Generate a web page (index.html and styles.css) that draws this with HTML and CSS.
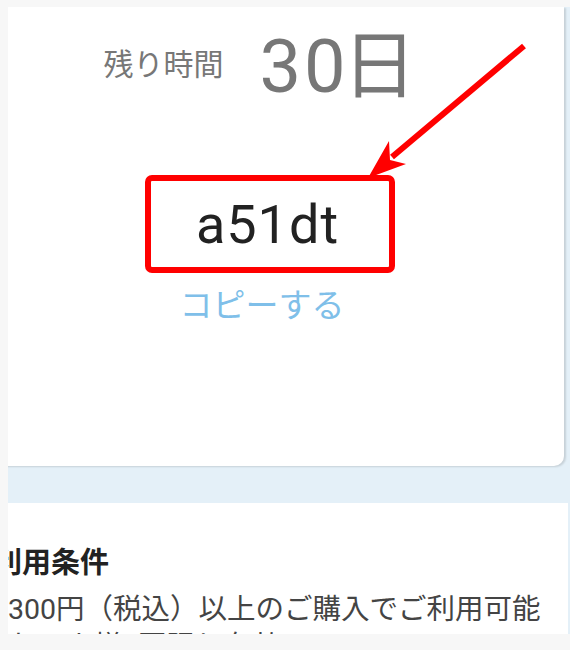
FILE: index.html
```html
<!DOCTYPE html>
<html lang="ja">
<head>
<meta charset="utf-8">
<link rel="stylesheet" href="styles.css">
</head>
<body>
<div class="frame">
  <div class="page">
    <section class="card">
      <div class="remain">
        <span class="remain-label">残り時間</span>
        <span class="remain-value"><span class="remain-num">30</span><span class="remain-unit">日</span></span>
      </div>
      <div class="code-box"><span class="code">a51dt</span></div>
      <div class="copy">コピーする</div>
    </section>
    <section class="terms">
      <h2 class="terms-title">利用条件</h2>
      <p class="terms-line">300円（税込）以上のご購入でご利用可能</p>
      <p class="terms-line terms-next">お一人様1回限り有効</p>
    </section>
  </div>
</div>
<svg class="arrow" width="570" height="650" viewBox="0 0 570 650">
  <line x1="524" y1="46" x2="392" y2="157" stroke="#ff0000" stroke-width="6"/>
  <polygon points="368,178 389,141 390,160 406,164" fill="#ff0000"/>
</svg>
</body>
</html>
```

FILE: styles.css
```css
html, body {
  margin: 0;
  padding: 0;
}
body {
  background: #f7f7f7;
  position: relative;
  width: 570px;
  height: 650px;
  overflow: hidden;
  font-family: Roboto, "Noto Sans CJK JP", sans-serif;
}
.frame {
  margin: 7px 0 0 8px;
  width: 562px;
  height: 627px;
  overflow: hidden;
  background: #e4f0f8;
}
.page {
  margin-left: -40px;
  width: 600px;
}
.card {
  width: 596px;
  height: 459px;
  box-sizing: border-box;
  padding-top: 20px;
  background: #fff;
  border-bottom-right-radius: 10px;
  box-shadow: 2px 1px 2px rgba(0, 0, 0, 0.13);
  display: flex;
  flex-direction: column;
  align-items: center;
  margin-bottom: 37px;
}
.remain {
  display: flex;
  align-items: center;
  padding-right: 12px;
  color: #777;
}
.remain-label {
  font-family: "Noto Sans CJK JP", sans-serif;
  font-size: 30px;
  line-height: 40px;
  margin-bottom: 10px;
}
.remain-value {
  display: block;
  height: 80px;
  font-size: 74px;
  line-height: 80px;
  margin-left: 36px;
  white-space: nowrap;
}
.remain-num {
  letter-spacing: 3px;
}
.remain-unit {
  font-family: "Noto Sans CJK JP", sans-serif;
  font-size: 74px;
  line-height: 50px;
  margin-left: -6px;
}
.code-box {
  margin-top: 68px;
  margin-left: 8px;
  width: 250px;
  height: 98px;
  box-sizing: border-box;
  border: 6px solid #ff0000;
  border-radius: 7px;
  display: flex;
  justify-content: center;
  padding-top: 2px;
  padding-right: 5px;
}
.code {
  font-size: 54px;
  letter-spacing: 1px;
  line-height: 84px;
  color: #222;
}
.copy {
  margin-top: 10px;
  margin-right: 8px;
  font-family: "Noto Sans CJK JP", sans-serif;
  font-size: 33px;
  line-height: 40px;
  color: #7fbfe9;
}
.terms {
  background: #fff;
  padding-top: 40px;
  height: 200px;
}
.terms-title {
  margin: 0;
  padding-left: 25px;
  font-family: "Noto Sans CJK JP", sans-serif;
  font-weight: 700;
  font-size: 29px;
  line-height: 34px;
  color: #222;
}
.terms-line {
  margin: 0;
  padding-left: 40px;
  font-size: 28.5px;
  line-height: 32px;
  color: #444;
  white-space: nowrap;
}
.terms-title + .terms-line {
  margin-top: 17px;
}
.terms-next {
  margin-top: 5px;
}
.arrow {
  position: absolute;
  top: 0;
  left: 0;
}
```
